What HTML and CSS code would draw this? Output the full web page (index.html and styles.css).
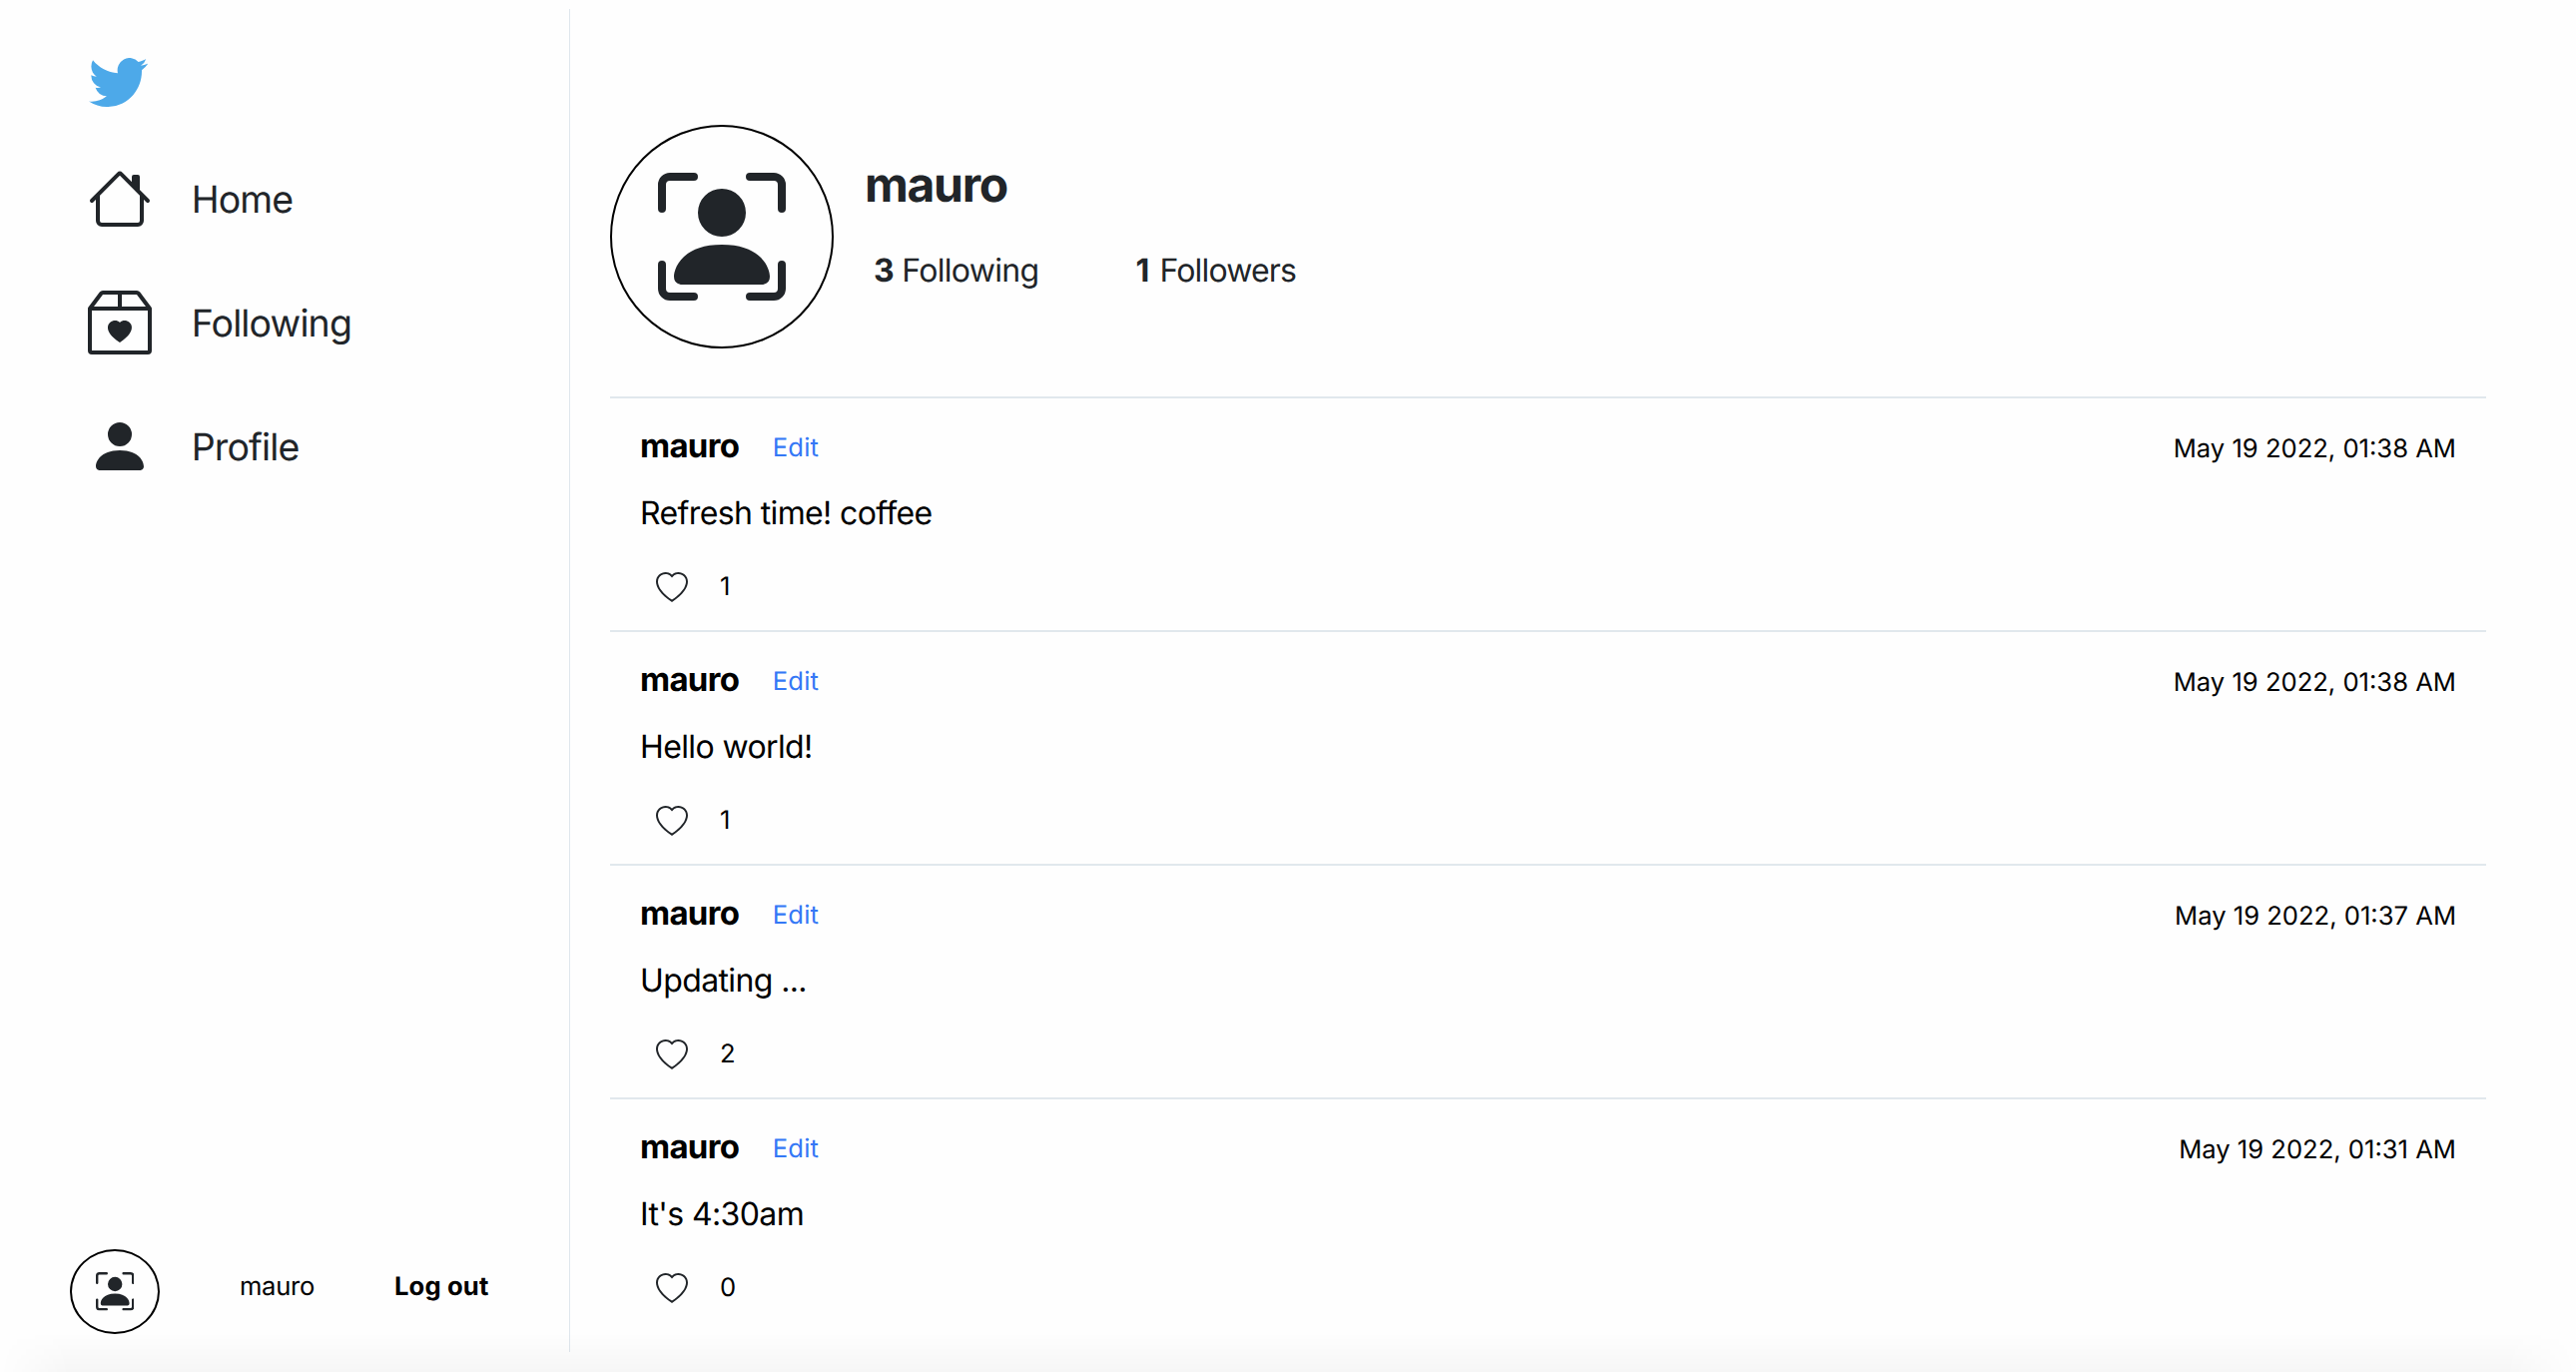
FILE: index.html
```html
<!DOCTYPE html>
<html lang="en">
<head>
<meta charset="utf-8">
<title>mauro</title>
<link rel="stylesheet" href="styles.css">
</head>
<body>
<svg class="defs" aria-hidden="true">
  <symbol id="person-box" viewBox="0 0 16 16">
    <path d="M1.5 1a.5.5 0 0 0-.5.5v3a.5.5 0 0 1-1 0v-3A1.5 1.5 0 0 1 1.5 0h3a.5.5 0 0 1 0 1h-3zM11 .5a.5.5 0 0 1 .5-.5h3A1.5 1.5 0 0 1 16 1.5v3a.5.5 0 0 1-1 0v-3a.5.5 0 0 0-.5-.5h-3a.5.5 0 0 1-.5-.5zM.5 11a.5.5 0 0 1 .5.5v3a.5.5 0 0 0 .5.5h3a.5.5 0 0 1 0 1h-3A1.5 1.5 0 0 1 0 14.5v-3a.5.5 0 0 1 .5-.5zm15 0a.5.5 0 0 1 .5.5v3a1.5 1.5 0 0 1-1.5 1.5h-3a.5.5 0 0 1 0-1h3a.5.5 0 0 0 .5-.5v-3a.5.5 0 0 1 .5-.5z"/>
    <path d="M3 14s-1 0-1-1 1-4 6-4 6 3 6 4-1 1-1 1H3zm8-9a3 3 0 1 1-6 0 3 3 0 0 1 6 0z"/>
  </symbol>
  <symbol id="heart" viewBox="0 0 16 16">
    <path d="m8 2.748-.717-.737C5.6.281 2.514.878 1.4 3.053c-.523 1.023-.641 2.5.314 4.385.92 1.815 2.834 3.989 6.286 6.357 3.452-2.368 5.365-4.542 6.286-6.357.955-1.886.838-3.362.314-4.385C13.486.878 10.4.28 8.717 2.01L8 2.748zM8 15C-7.333 4.868 3.279-3.04 7.824 1.143c.06.055.119.112.176.171a3.12 3.12 0 0 1 .176-.17C12.72-3.042 23.333 4.867 8 15z"/>
  </symbol>
</svg>
<div class="page">
  <aside class="sidebar">
    <svg class="logo" viewBox="0 2.25 24 19.5" preserveAspectRatio="none"><path d="M23.953 4.57a10 10 0 01-2.825.775 4.958 4.958 0 002.163-2.723c-.951.555-2.005.959-3.127 1.184a4.92 4.92 0 00-8.384 4.482C7.69 8.095 4.067 6.13 1.64 3.162a4.822 4.822 0 00-.666 2.475c0 1.71.87 3.213 2.188 4.096a4.904 4.904 0 01-2.228-.616v.06a4.923 4.923 0 003.946 4.827 4.996 4.996 0 01-2.212.085 4.936 4.936 0 004.604 3.417 9.867 9.867 0 01-6.102 2.105c-.39 0-.779-.023-1.17-.067a13.995 13.995 0 007.557 2.209c9.053 0 13.998-7.496 13.998-13.985 0-.21 0-.42-.015-.63A9.935 9.935 0 0024 4.59z"/></svg>
    <nav class="nav">
      <a class="nav-item"><svg viewBox="0 0 16 16"><path d="M2 13.5V7h1v6.5a.5.5 0 0 0 .5.5h9a.5.5 0 0 0 .5-.5V7h1v6.5a1.5 1.5 0 0 1-1.5 1.5h-9A1.5 1.5 0 0 1 2 13.5zm11-11V6l-2-2V2.5a.5.5 0 0 1 .5-.5h1a.5.5 0 0 1 .5.5z"/><path d="M7.293 1.5a1 1 0 0 1 1.414 0l6.647 6.646a.5.5 0 0 1-.708.708L8 2.207 1.354 8.854a.5.5 0 1 1-.708-.708L7.293 1.5z"/></svg><span>Home</span></a>
      <a class="nav-item"><svg viewBox="0 0 16 16"><path d="M8 7.982C9.664 6.309 13.825 9.236 8 13 2.175 9.236 6.336 6.31 8 7.982Z"/><path d="M3.75 0a1 1 0 0 0-.8.4L.1 4.2a.5.5 0 0 0-.1.3V15a1 1 0 0 0 1 1h14a1 1 0 0 0 1-1V4.5a.5.5 0 0 0-.1-.3L13.05.4a1 1 0 0 0-.8-.4h-8.5Zm0 1H7.5v3h-6l2.25-3ZM8.5 4V1h3.75l2.25 3h-6ZM15 5v10H1V5h14Z"/></svg><span>Following</span></a>
      <a class="nav-item"><svg viewBox="0 0 16 16"><path d="M3 14s-1 0-1-1 1-4 6-4 6 3 6 4-1 1-1 1H3zm5-6a3 3 0 1 0 0-6 3 3 0 0 0 0 6z"/></svg><span>Profile</span></a>
    </nav>
    <div class="account">
      <div class="avatar avatar-small"><svg><use href="#person-box"/></svg></div>
      <span class="account-name">mauro</span>
      <a class="logout">Log out</a>
    </div>
  </aside>
  <main class="main">
    <header class="profile">
      <div class="avatar avatar-large"><svg><use href="#person-box"/></svg></div>
      <div class="profile-info">
        <h1>mauro</h1>
        <div class="stats">
          <span><b>3</b> Following</span>
          <span class="followers"><b>1</b> Followers</span>
        </div>
      </div>
    </header>
    <article class="post">
      <div class="post-head"><b class="author">mauro</b><a class="edit">Edit</a><time>May 19 2022, 01:38 AM</time></div>
      <p>Refresh time! coffee</p>
      <div class="likes"><svg><use href="#heart"/></svg><span>1</span></div>
    </article>
    <article class="post">
      <div class="post-head"><b class="author">mauro</b><a class="edit">Edit</a><time>May 19 2022, 01:38 AM</time></div>
      <p>Hello world!</p>
      <div class="likes"><svg><use href="#heart"/></svg><span>1</span></div>
    </article>
    <article class="post">
      <div class="post-head"><b class="author">mauro</b><a class="edit">Edit</a><time>May 19 2022, 01:37 AM</time></div>
      <p>Updating ...</p>
      <div class="likes"><svg><use href="#heart"/></svg><span>2</span></div>
    </article>
    <article class="post">
      <div class="post-head"><b class="author">mauro</b><a class="edit">Edit</a><time>May 19 2022, 01:31 AM</time></div>
      <p>It's 4:30am</p>
      <div class="likes"><svg><use href="#heart"/></svg><span>0</span></div>
    </article>
  </main>
</div>
<div class="bottom-shade"></div>
</body>
</html>
```
FILE: styles.css
```css
* {
  box-sizing: border-box;
}

body {
  margin: 0;
  height: 1374px;
  overflow: hidden;
  background: #fefefe;
  color: #000;
  font-family: Inter, "Liberation Sans", sans-serif;
  font-size: 25.6px;
  text-rendering: geometricPrecision;
}

svg {
  display: block;
  flex: none;
  fill: #212529;
}

.defs {
  display: none;
}

.page {
  display: flex;
  height: 1374px;
  padding-top: 9px;
}

/* Sidebar */

.sidebar {
  display: flex;
  flex-direction: column;
  width: 571px;
  height: 1345px;
  padding: 49px 0 18px 70px;
  border-right: 1px solid #dfe6ec;
}

.logo {
  width: 59px;
  height: 49px;
  margin-left: 18.5px;
  fill: #4da9e9;
}

.nav {
  display: flex;
  flex-direction: column;
  gap: 60px;
  margin: 60px 0 0 18px;
}

.nav-item {
  display: flex;
  align-items: center;
  gap: 39.7px;
  height: 64px;
  color: #212529;
  font-size: 37.5px;
  letter-spacing: -0.85px;
}

.nav-item span {
  padding-top: 2px;
}

.nav-item svg {
  width: 64px;
  height: 64px;
}

.account {
  display: flex;
  align-items: flex-start;
  gap: 80px;
  margin-top: auto;
  line-height: 32px;
}

.account-name {
  margin-top: 22px;
  letter-spacing: -0.3px;
}

.logout {
  margin-top: 22px;
  font-weight: 700;
  letter-spacing: 0.15px;
}

.avatar {
  display: flex;
  align-items: center;
  justify-content: center;
  flex: none;
  border: 2px solid #000;
  border-radius: 50%;
}

.avatar-small {
  width: 90px;
  height: 85px;
}

.avatar-small svg {
  width: 38.4px;
  height: 38.4px;
}

.avatar-large {
  width: 224px;
  height: 224px;
}

.avatar-large svg {
  width: 128px;
  height: 128px;
}

/* Profile */

.main {
  width: 1879px;
  margin-left: 40px;
  padding-top: 116px;
}

.profile {
  display: flex;
  gap: 31px;
  height: 272px;
  color: #212529;
}

.profile-info {
  padding-top: 30px;
}

.profile h1 {
  margin: 0;
  font-size: 48px;
  line-height: 60px;
  letter-spacing: -1.3px;
}

.stats {
  display: flex;
  gap: 97px;
  margin-top: 36px;
  padding-left: 9px;
  font-size: 32px;
  line-height: 40px;
  letter-spacing: -0.7px;
}

.followers {
  letter-spacing: -0.85px;
}

.followers b {
  margin-right: 3px;
}

/* Posts */

.post {
  height: 234px;
  padding: 28px 30px 0;
  border-top: 2px solid #e1e8ed;
}

.post-head {
  display: flex;
  align-items: flex-start;
  height: 43px;
}

.author {
  font-size: 33px;
  line-height: 38px;
  letter-spacing: -0.7px;
}

.edit {
  margin-left: 33.5px;
  color: #3478f6;
  line-height: 43px;
  letter-spacing: 0.2px;
}

time {
  margin-left: auto;
  line-height: 45px;
}

.post p {
  margin: 25px 0 40px;
  font-size: 32px;
  line-height: 38px;
  letter-spacing: -0.62px;
}

.likes {
  display: flex;
  gap: 32px;
  padding-left: 16px;
  line-height: 30px;
}

.likes svg {
  width: 32px;
  height: 32px;
}

/* Faint shade along the window's lower edge */

.bottom-shade {
  position: fixed;
  right: 0;
  bottom: 0;
  left: 0;
  height: 40px;
  background: linear-gradient(rgba(0, 0, 0, 0), rgba(0, 0, 0, 0.03));
  -webkit-mask-image: linear-gradient(90deg, transparent, #000 70px, #000 calc(100% - 70px), transparent);
  mask-image: linear-gradient(90deg, transparent, #000 70px, #000 calc(100% - 70px), transparent);
}
```
